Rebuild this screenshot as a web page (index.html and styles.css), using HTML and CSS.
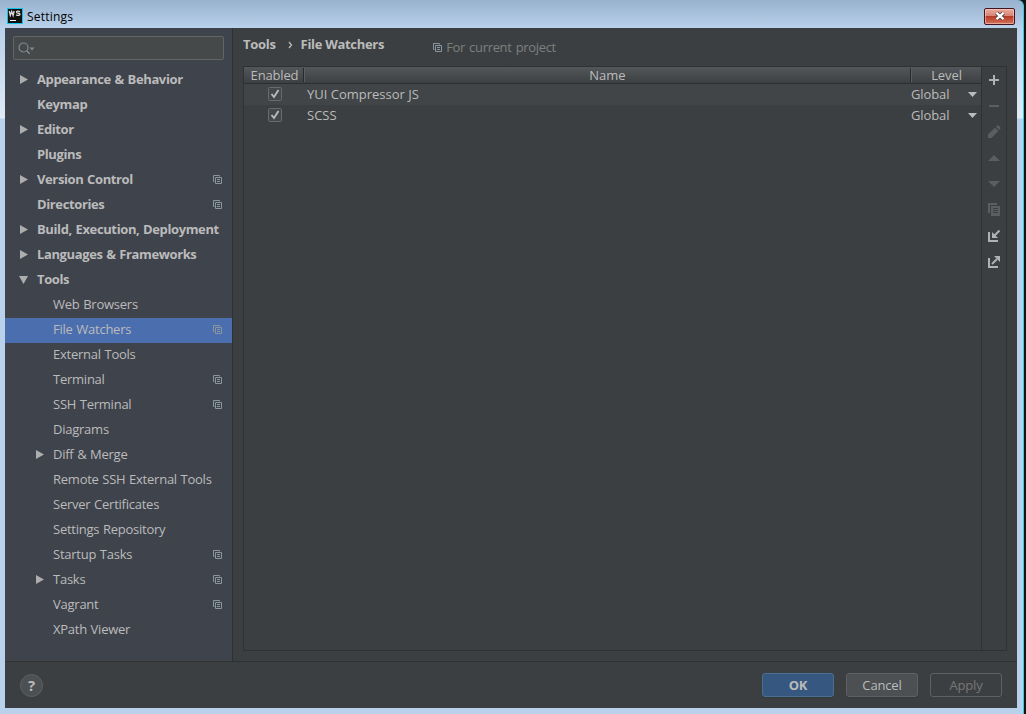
FILE: index.html
```html
<!DOCTYPE html>
<html lang="en">
    <head>
        <meta charset="UTF-8">
        <title>Settings</title>
        <link rel="stylesheet" href="styles.css">
    </head>
    <body>
        <svg class="sprite" width="0" height="0">
            <symbol id="copy" viewBox="0 0 9 9">
                <path d="M1.500 6.500h-1v-6h6v1M2.500 2.500h6v6h-6zM4 4.500h3M4 6.500h3" fill="none" stroke="currentColor"/>
            </symbol>
            <symbol id="right" viewBox="0 0 8 9">
                <path d="M0 0l8 4.500l-8 4.500z" fill="currentColor"/>
            </symbol>
            <symbol id="down" viewBox="0 0 9 8">
                <path d="M0 0h9l-4.500 8z" fill="currentColor"/>
            </symbol>
            <symbol id="caret" viewBox="0 0 9 5">
                <path d="M0 0h9l-4.500 5z" fill="currentColor"/>
            </symbol>
            <symbol id="tick" viewBox="0 0 14 14">
                <rect x="0.500" y="0.500" width="13" height="13" rx="1" fill="#43494a" stroke="#6b6b6b"/>
                <path d="M3.500 7l2.500 3l4.500-7" fill="none" stroke="#bbb" stroke-width="1.900"/>
            </symbol>
        </svg>

        <div class="window">
            <div class="titlebar">
                <svg class="logo" width="16" height="16" viewBox="0 0 16 16">
                    <rect x="0.500" y="0.500" width="15" height="15" fill="#111" stroke="#14c3e6"/>
                    <path d="M2.300 3l1 4.500l1.400-4l1.400 4l1-4.500M13 3.700c-1.500-1-3.600-.7-3.500.5c.1 1.500 3.500.6 3.500 2.100c0 1.400-2.500 1.500-3.800.4" fill="none" stroke="#ddd" stroke-width="1.300"/>
                    <path d="M3 12.500h6" stroke="#fff"/>
                </svg>
                <span class="caption">Settings</span>
                <div class="close">
                    <svg width="12" height="10" viewBox="0 0 12 10">
                        <path d="M2.500 2l7 6M9.500 2l-7 6" stroke="#51404a" stroke-width="4.200"/>
                        <path d="M2.500 1.800l7 6.400M9.500 1.800l-7 6.400" stroke="#fff" stroke-width="2.300"/>
                    </svg>
                </div>
            </div>

            <div class="main">
                <div class="sidebar">
                    <div class="search">
                        <svg width="17" height="13" viewBox="0 0 17 13">
                            <circle cx="5.500" cy="5.500" r="4.500" fill="none" stroke="#7f8b91" stroke-width="1.200"/>
                            <path d="M8.700 8.700l3 3" stroke="#7f8b91" stroke-width="1.600"/>
                            <path d="M11.500 5.500h5l-2.500 3z" fill="#7f8b91"/>
                        </svg>
                    </div>
                    <ul class="tree">
                        <li class="top"><svg class="arrow"><use href="#right"/></svg><span>Appearance &amp; Behavior</span></li>
                        <li class="top"><span>Keymap</span></li>
                        <li class="top"><svg class="arrow"><use href="#right"/></svg><span>Editor</span></li>
                        <li class="top"><span>Plugins</span></li>
                        <li class="top"><svg class="arrow"><use href="#right"/></svg><span>Version Control</span><svg class="copy"><use href="#copy"/></svg></li>
                        <li class="top"><span>Directories</span><svg class="copy"><use href="#copy"/></svg></li>
                        <li class="top"><svg class="arrow"><use href="#right"/></svg><span>Build, Execution, Deployment</span></li>
                        <li class="top"><svg class="arrow"><use href="#right"/></svg><span>Languages &amp; Frameworks</span></li>
                        <li class="top"><svg class="arrow open"><use href="#down"/></svg><span>Tools</span></li>
                        <li><span>Web Browsers</span></li>
                        <li class="selected"><span>File Watchers</span><svg class="copy"><use href="#copy"/></svg></li>
                        <li><span>External Tools</span></li>
                        <li><span>Terminal</span><svg class="copy"><use href="#copy"/></svg></li>
                        <li><span>SSH Terminal</span><svg class="copy"><use href="#copy"/></svg></li>
                        <li><span>Diagrams</span></li>
                        <li><svg class="arrow"><use href="#right"/></svg><span>Diff &amp; Merge</span></li>
                        <li><span>Remote SSH External Tools</span></li>
                        <li><span>Server Certificates</span></li>
                        <li><span>Settings Repository</span></li>
                        <li><span>Startup Tasks</span><svg class="copy"><use href="#copy"/></svg></li>
                        <li><svg class="arrow"><use href="#right"/></svg><span>Tasks</span><svg class="copy"><use href="#copy"/></svg></li>
                        <li><span>Vagrant</span><svg class="copy"><use href="#copy"/></svg></li>
                        <li><span>XPath Viewer</span></li>
                    </ul>
                </div>

                <div class="content">
                    <div class="breadcrumb">
                        <b>Tools</b>
                        <svg class="chevron" width="5" height="8" viewBox="0 0 5 8"><path d="M1 1l2.500 3l-2.500 3" fill="none" stroke="#bbb" stroke-width="1.300"/></svg>
                        <b>File Watchers</b>
                        <span class="scope"><svg class="copy"><use href="#copy"/></svg>For current project</span>
                    </div>
                    <div class="panel">
                        <div class="table">
                            <div class="row head">
                                <div class="enabled">Enabled</div>
                                <div class="name">Name</div>
                                <div class="level">Level</div>
                            </div>
                            <div class="row odd">
                                <div class="enabled"><svg class="tick"><use href="#tick"/></svg></div>
                                <div class="name">YUI Compressor JS</div>
                                <div class="level"><span>Global</span><svg class="caret"><use href="#caret"/></svg></div>
                            </div>
                            <div class="row">
                                <div class="enabled"><svg class="tick"><use href="#tick"/></svg></div>
                                <div class="name">SCSS</div>
                                <div class="level"><span>Global</span><svg class="caret"><use href="#caret"/></svg></div>
                            </div>
                        </div>
                        <div class="tools">
                            <svg viewBox="0 0 14 14"><path d="M7 2v10M2 7h10" stroke="#afb1b3" stroke-width="2"/></svg>
                            <svg viewBox="0 0 14 14"><path d="M2 7h10" stroke="currentColor" stroke-width="2"/></svg>
                            <svg viewBox="0 0 14 14"><path d="M1 13v-3.500l7-7l3.500 3.500l-7 7zM9 1.700l1-1q1-.8 2 .2l1 1q1 1 .2 2l-1 1z" fill="currentColor"/></svg>
                            <svg viewBox="0 0 14 14"><path d="M1 10h12l-6-6z" fill="currentColor"/></svg>
                            <svg viewBox="0 0 14 14"><path d="M1 4h12l-6 6z" fill="currentColor"/></svg>
                            <svg viewBox="0 0 14 14"><path d="M1 0h9v2h-7v8h-2z" fill="currentColor"/><path d="M4 3h9v10h-9zM6 5v1h5v-1zM6 7v1h5v-1zM6 9v1h5v-1z" fill="currentColor" fill-rule="evenodd"/></svg>
                            <svg viewBox="0 0 14 14"><path d="M2 3v9h9" fill="none" stroke="#afb1b3" stroke-width="2"/><path d="M12.500 1.500l-5 5" stroke="#afb1b3" stroke-width="2"/><path d="M5 3v6h6z" fill="#afb1b3"/></svg>
                            <svg viewBox="0 0 14 14"><path d="M2 3v9h9" fill="none" stroke="#afb1b3" stroke-width="2"/><path d="M5 9l5-5" stroke="#afb1b3" stroke-width="2"/><path d="M7 1h6v6z" fill="#afb1b3"/></svg>
                        </div>
                    </div>
                </div>
            </div>

            <div class="footer">
                <div class="help">?</div>
                <div class="button primary">OK</div>
                <div class="button">Cancel</div>
                <div class="button disabled">Apply</div>
            </div>
        </div>
    </body>
</html>
```

FILE: styles.css
```css
*
{
    box-sizing: border-box;
}

body
{
    margin: 0;
    width: 1026px;
    height: 714px;
    overflow: hidden;
    background: #101416;
    color: #bbb;
    font: 13px/18px "Open Sans", "Noto Sans", sans-serif;
    white-space: nowrap;
}

svg
{
    display: block;
    flex: none;
}

.sprite
{
    position: absolute;
}

.window
{
    display: flex;
    flex-direction: column;
    width: 1024px;
    height: 714px;
    padding: 0 6px 6px 5px;
    border-right: 1px solid #35c9e4;
    border-top-right-radius: 6px;
    background: linear-gradient(#98b1cd, #b9d1ea 28px, #e0ebf6 118px, #b9d1ea 119px);
}

/* title bar */
.titlebar
{
    display: flex;
    align-items: center;
    height: 28px;
    flex: none;
    padding: 4px 2px 0 2px;
    color: #000;
}

.caption
{
    margin: 2px 0 0 4px;
    font-size: 12px;
    letter-spacing: 0.2px;
}

.close
{
    display: flex;
    align-items: center;
    justify-content: center;
    width: 31px;
    height: 17px;
    margin-left: auto;
    border: 1px solid #431422;
    border-radius: 2px;
    background: linear-gradient(#e9a99c, #d98577 45%, #b83a25 50%, #d4735a);
    box-shadow: inset 0 0 0 1px rgba(255, 220, 210, 0.5);
}

/* settings tree */
.main
{
    display: flex;
    height: 633px;
    background: #3c3f41;
}

.sidebar
{
    width: 228px;
    flex: none;
    padding-top: 8px;
    border-right: 1px solid #2f3133;
    background: #3f434c;
}

.search
{
    display: flex;
    align-items: center;
    width: 211px;
    height: 24px;
    margin: 0 8px 8px;
    padding-left: 4px;
    border: 1px solid #646464;
    border-radius: 2px;
    background: #45494a;
}

.tree
{
    margin: 0;
    padding: 0;
    list-style: none;
    letter-spacing: -0.24px;
    word-spacing: 0.5px;
}

.tree li
{
    display: flex;
    align-items: center;
    height: 25px;
    padding: 0 10px 2px 48px;
}

.tree li.top
{
    padding-left: 32px;
    font-weight: bold;
    letter-spacing: -0.38px;
    word-spacing: 0.7px;
}

.tree li.selected
{
    background: #4b6eaf;
}

.tree span
{
    margin-top: -2px;
}

.arrow
{
    width: 8px;
    height: 9px;
    margin-left: -17px;
    margin-right: 9px;
    color: #adadad;
}

.arrow.open
{
    width: 9px;
    height: 8px;
    margin-left: -18px;
}

.copy
{
    width: 9px;
    height: 9px;
    color: #8a969e;
}

.tree .copy
{
    margin-left: auto;
}

/* file watchers */
.content
{
    flex: 1;
    padding: 0 10px;
}

.breadcrumb
{
    display: flex;
    align-items: flex-start;
    height: 38px;
    padding-top: 7px;
}

.breadcrumb b
{
    letter-spacing: -0.3px;
}

.chevron
{
    margin: 6px 8px 0 12px;
}

.scope
{
    display: flex;
    align-items: center;
    margin: 3px 0 0 49px;
    color: #7c7f80;
    letter-spacing: -0.32px;
    word-spacing: 1px;
}

.scope .copy
{
    margin-right: 4px;
}

.panel
{
    display: flex;
    height: 585px;
    width: 764px;
    border: 1px solid #2f3133;
}

.table
{
    flex: 1;
}

.row
{
    display: flex;
    align-items: center;
    height: 21px;
}

.odd
{
    background: #414547;
}

.head
{
    height: 17px;
    border-bottom: 1px solid #2c2e2f;
    background: linear-gradient(#53575a, #3d4042);
    text-align: center;
}

.enabled
{
    display: flex;
    justify-content: center;
    width: 59px;
}

.head .enabled
{
    padding-left: 2px;
    letter-spacing: -0.15px;
}

.tick
{
    width: 14px;
    height: 14px;
    margin: -2px 0 0 3px;
}

.name
{
    flex: 1;
    margin-top: -2px;
    padding-left: 4px;
}

.level
{
    display: flex;
    align-items: center;
    justify-content: space-between;
    width: 71px;
    padding: 0 4px 0 1px;
    letter-spacing: -0.1px;
}

.level span
{
    margin-top: -2px;
}

.caret
{
    width: 9px;
    height: 5px;
    color: #bbb;
}

.head .name,
.head .level
{
    display: block;
    height: 14px;
    margin: 0;
    padding: 0 0 0 1px;
    border-left: 1px solid #27292a;
    box-shadow: inset 1px 0 #5a5e60;
    line-height: 15px;
}

.tools
{
    width: 25px;
    padding: 6px 0 0 5px;
    border-left: 1px solid #2f3133;
}

.tools svg
{
    width: 14px;
    height: 14px;
    margin-bottom: 12px;
    color: #5b5d5f;
}

/* bottom buttons */
.footer
{
    display: flex;
    align-items: center;
    height: 47px;
    padding: 0 15px 0 15px;
    border-top: 1px solid #2f3133;
    background: #3c3f41;
}

.help
{
    width: 23px;
    height: 23px;
    margin-right: auto;
    border: 1px solid #5e6163;
    border-radius: 50%;
    background: #4c5052;
    font: bold 15px/21px "Open Sans", sans-serif;
    text-align: center;
}

.button
{
    width: 72px;
    height: 24px;
    margin-left: 12px;
    border: 1px solid #5e6163;
    border-radius: 3px;
    background: #4c5052;
    box-shadow: 0 1px 1px #36393a;
    line-height: 22px;
    letter-spacing: -0.15px;
    text-align: center;
}

.button.primary
{
    border-color: #4b6f90;
    background: #365880;
    font-weight: bold;
}

.button.disabled
{
    background: none;
    box-shadow: none;
    color: #777;
}
```
